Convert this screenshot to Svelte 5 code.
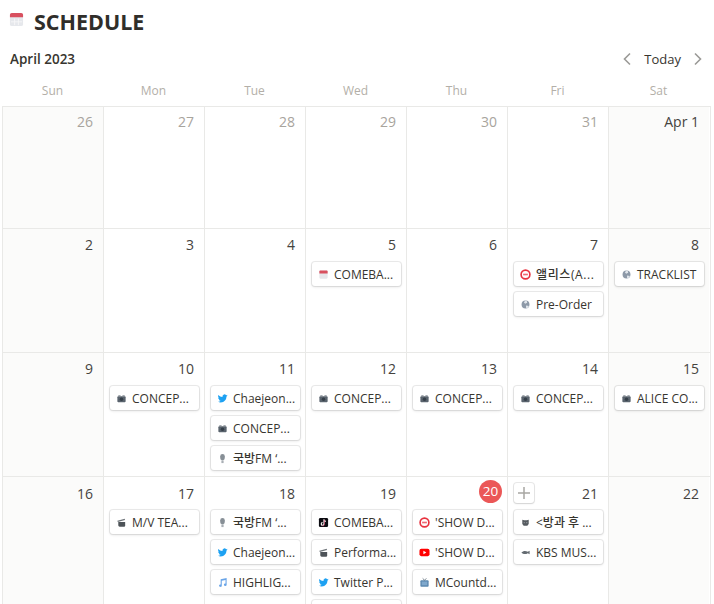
<script>
  const days = ['Sun', 'Mon', 'Tue', 'Wed', 'Thu', 'Fri', 'Sat'];

  const c = (icon, label, kr = false) => ({ icon, label, kr });
  const concept = () => c('camera', 'CONCEP...');
  const chae = () => c('twitter', 'Chaejeon...');
  const radio = () => c('mic', '국방FM ‘...');

  const weeks = [
    [
      { n: '26', muted: true }, { n: '27', muted: true }, { n: '28', muted: true }, { n: '29', muted: true },
      { n: '30', muted: true }, { n: '31', muted: true }, { n: 'Apr 1' },
    ],
    [
      { n: '2' }, { n: '3' }, { n: '4' },
      { n: '5', cards: [c('cal', 'COMEBA...')] },
      { n: '6' },
      { n: '7', cards: [c('ban', '앨리스(A...', true), c('globe', 'Pre-Order')] },
      { n: '8', cards: [c('globe', 'TRACKLIST')] },
    ],
    [
      { n: '9' },
      { n: '10', cards: [concept()] },
      { n: '11', cards: [chae(), concept(), radio()] },
      { n: '12', cards: [concept()] },
      { n: '13', cards: [concept()] },
      { n: '14', cards: [concept()] },
      { n: '15', cards: [c('camera', 'ALICE CO...')] },
    ],
    [
      { n: '16' },
      { n: '17', cards: [c('clap', 'M/V TEA...')] },
      { n: '18', cards: [radio(), chae(), c('note', 'HIGHLIG...')] },
      { n: '19', cards: [c('tiktok', 'COMEBA...'), c('clap', 'Performa...'), c('twitter', 'Twitter P...'), c('', '')] },
      { n: '20', today: true, cards: [c('ban', "'SHOW D..."), c('youtube', "'SHOW D..."), c('tv', 'MCountd...')] },
      { n: '21', add: true, cards: [c('cat', '<방과 후 ...'), c('fish', 'KBS MUS...')] },
      { n: '22' },
    ],
  ];
</script>

{#snippet icon(name)}
  <svg class="ico" viewBox="0 0 12 12" aria-hidden="true">
    {#if name === 'camera'}
      <rect x="1.500" y="3.500" width="9" height="6.500" rx="1" fill="#59636d" />
      <rect x="2.500" y="2.500" width="2.500" height="1.500" fill="#808890" />
      <rect x="7" y="2.500" width="2.500" height="1.500" fill="#808890" />
      <circle cx="6" cy="6.700" r="1.900" fill="#343e48" />
    {:else if name === 'twitter'}
      <path fill="#1da1f2" d="M11.500 2.600c-.4.2-.8.3-1.300.4.500-.3.800-.7 1-1.200-.4.3-.9.400-1.400.5a2.200 2.200 0 0 0-3.800 2C4.200 4.200 2.600 3.400 1.500 2.100c-.6 1-.3 2.300.7 3-.4 0-.7-.1-1-.3 0 1.100.8 2 1.800 2.200-.3.100-.7.100-1 0 .3.900 1.100 1.500 2.100 1.500-.9.700-2.100 1.100-3.300.9 1 .6 2.100 1 3.300 1 4 0 6.300-3.400 6.200-6.500.4-.3.800-.6 1.200-1z" />
    {:else if name === 'mic'}
      <rect x="3.500" y="1" width="5" height="7" rx="2.500" fill="#878f96" />
      <rect x="4.800" y="8" width="2.400" height="3" fill="#a9afb5" />
    {:else if name === 'cal'}
      <rect x="1.500" y="1.500" width="9" height="9" rx="1.200" fill="#e6e6ea" />
      <path fill="#d8505f" d="M1.500 5V2.700c0-.7.500-1.200 1.200-1.200h6.600c.7 0 1.200.5 1.200 1.200V5z" />
    {:else if name === 'ban'}
      <circle cx="6" cy="6" r="4.800" fill="#fff" stroke="#e8323f" stroke-width="1.800" />
      <rect x="3.400" y="5.100" width="5.200" height="1.800" fill="#ef6a74" />
    {:else if name === 'globe'}
      <circle cx="6" cy="6" r="4.300" fill="#8d99a8" />
      <path fill="#dfe4ea" d="M6 1.700c1.400.3 2 1.400 1.800 2.500L5.600 5.300 4.200 3.500zM6.500 7l3.200.5c-.5 1.400-1.600 2.500-3 2.800z" />
    {:else if name === 'clap'}
      <path fill="#4d5358" d="M2.500 5.500h7.500v4c0 .6-.5 1-1 1H4c-.8 0-1.500-.6-1.500-1.500z" />
      <path fill="#6d7378" d="M1.500 4 9.500 2l.4 1.400-8 2.100z" />
    {:else if name === 'note'}
      <path fill="#6aa5e8" d="M4 2.500 10.500 1v7.500a1.500 1.300 0 1 1-1.200-1.300V3.300L5.200 4.200v5.300A1.500 1.300 0 1 1 4 8.200z" />
    {:else if name === 'tiktok'}
      <rect x="1" y="1" width="10" height="10" rx="1.500" fill="#0b0b10" />
      <path fill="none" stroke="#fff" stroke-width="1.200" d="M6.500 2.500v5a1.500 1.500 0 1 1-1.500-1.500M6.500 2.700c.2 1.200 1 1.900 2.200 2" />
      <path fill="none" stroke="#ee1d52" stroke-width=".5" d="M7 3v5a1.500 1.500 0 0 1-2.500 1.300" />
    {:else if name === 'youtube'}
      <rect x=".5" y="2" width="11" height="8" rx="2" fill="#f00" />
      <path fill="#fff" d="M4.800 4.200v3.600L8 6z" />
    {:else if name === 'tv'}
      <rect x="1.500" y="3.500" width="9" height="7" rx="1" fill="#5c89b0" />
      <rect x="3" y="5" width="6" height="4" fill="#7fa8cc" />
      <path stroke="#4a5a68" stroke-width=".8" d="M4 1.500 6 3.500l2-2" fill="none" />
    {:else if name === 'cat'}
      <path fill="#565b60" d="M2.500 3 4.500 3.500h3L9.500 3v4.500L8 9.500H4L2.500 7.500z" />
      <path fill="#8a8f94" d="M4 5.500h1.300v1.300H4zM6.700 5.500H8v1.300H6.700z" />
    {:else if name === 'fish'}
      <path fill="#646b71" d="M1.500 6c2-2 4.500-2.300 7-.8L10.500 4v4L8.500 6.800C6 8.300 3.500 8 1.500 6z" />
    {/if}
  </svg>
{/snippet}

<div class="page">
  <header class="title">
    <svg class="title-ico" viewBox="0 0 16 16" aria-hidden="true">
      <rect x="1" y="1" width="14" height="14" rx="2" fill="#e6e8ec" />
      <path fill="#d8505f" d="M1 5.500V3c0-1.100.9-2 2-2h10c1.100 0 2 .9 2 2v2.500z" />
      <path stroke="#f6f6f8" stroke-width="1" d="M6 7v7M10 7v7M2 10.500h12" />
    </svg>
    <h1>SCHEDULE</h1>
  </header>

  <div class="bar">
    <span class="month">April 2023</span>
    <div class="nav">
      <svg class="chev" viewBox="0 0 10 14" aria-hidden="true"><path d="M8 1.500 2.500 7 8 12.500" /></svg>
      <span class="today-btn">Today</span>
      <svg class="chev" viewBox="0 0 10 14" aria-hidden="true"><path d="M2 1.500 7.500 7 2 12.500" /></svg>
    </div>
  </div>

  <div class="dow">
    {#each days as d}
      <div>{d}</div>
    {/each}
  </div>

  <div class="grid">
    {#each weeks as week}
      <div class="week">
        {#each week as day, i}
          <div class="cell" class:weekend={i === 0 || i === 6}>
            {#if day.add}
              <span class="add">
                <svg viewBox="0 0 14 14" aria-hidden="true"><path d="M7 1v12M1 7h12" /></svg>
              </span>
            {/if}
            <div class="num" class:muted={day.muted}>
              {#if day.today}
                <span class="today">{day.n}</span>
              {:else}
                {day.n}
              {/if}
            </div>
            {#each day.cards ?? [] as card}
              <div class="card">
                {#if card.icon}
                  {@render icon(card.icon)}
                  <span class="label" class:kr={card.kr}>{card.label}</span>
                {/if}
              </div>
            {/each}
          </div>
        {/each}
      </div>
    {/each}
  </div>
</div>

<style>
  :global(body) { background: #fff; overflow: hidden; }

  .page {
    width: 714px;
    height: 604px;
    overflow: hidden;
    font-family: "Open Sans", "Noto Sans CJK KR", sans-serif;
    color: #37352f;
  }

  .title {
    display: flex;
    align-items: center;
    gap: 10px;
    height: 44px;
    padding-left: 9px;
  }
  .title-ico { width: 15px; height: 15px; margin-bottom: 5px; }
  h1 {
    margin: 0;
    font-size: 21.500px;
    font-weight: 700;
    line-height: 44px;
    color: #302e2a;
  }

  .bar {
    display: flex;
    align-items: center;
    justify-content: space-between;
    height: 30px;
    padding: 0 10px;
  }
  .month { font-size: 13.500px; font-weight: 600; }
  .nav { display: flex; align-items: center; gap: 12px; font-size: 13px; margin-right: 1px; }
  .chev { width: 10px; height: 14px; fill: none; stroke: #9b9a97; stroke-width: 1.600; }

  .dow {
    display: grid;
    grid-template-columns: repeat(7, 101px);
    height: 32px;
    padding-left: 2px;
    box-sizing: border-box;
    align-items: center;
    font-size: 12px;
    color: #b3afa8;
    text-align: center;
  }

  .grid {
    margin-left: 2px;
    width: 708px;
    border-top: 1px solid #e9e9e7;
    border-right: 1px solid #e9e9e7;
  }
  .week {
    display: grid;
    grid-template-columns: repeat(7, 101px);
    height: 124px;
    box-sizing: border-box;
    border-bottom: 1px solid #e9e9e7;
  }
  .week:first-child { height: 122px; }
  .week:last-child { height: 160px; }

  .cell {
    position: relative;
    box-sizing: border-box;
    border-left: 1px solid #e9e9e7;
    padding: 0 4px 0 6px;
  }
  .weekend { background: #fbfbfa; }

  .num {
    height: 33px;
    box-sizing: border-box;
    padding: 6px 6px 0 0;
    text-align: right;
    font-size: 14px;
    line-height: 20px;
    color: #45433e;
  }
  .week:first-child .num { padding-top: 5px; }
  .week:last-child .num { padding-top: 7px; }
  .muted { color: #a8a49d; }

  .today {
    position: absolute;
    top: 3px;
    right: 5px;
    width: 23px;
    height: 23px;
    border-radius: 50%;
    background: #eb5757;
    color: #fff;
    font-size: 13.500px;
    line-height: 23px;
    text-align: center;
  }

  .add {
    position: absolute;
    top: 6px;
    left: 6px;
    width: 20px;
    height: 20px;
    display: flex;
    align-items: center;
    justify-content: center;
    background: #fff;
    border-radius: 3px;
    box-shadow: 0 0 0 1px rgba(15, 15, 15, 0.09), 0 1px 2px rgba(15, 15, 15, 0.1);
  }
  .add svg { width: 14px; height: 14px; fill: none; stroke: #a8a7a3; stroke-width: 1.500; }

  .card {
    display: flex;
    align-items: center;
    gap: 5px;
    height: 24px;
    width: 89px;
    margin-bottom: 6px;
    padding-left: 6px;
    box-sizing: border-box;
    background: #fff;
    border-radius: 3px;
    box-shadow: 0 0 0 1px rgba(15, 15, 15, 0.08), 0 1px 3px rgba(15, 15, 15, 0.12);
    font-size: 12px;
    font-weight: 500;
    white-space: nowrap;
    overflow: hidden;
  }
  .ico { width: 11px; height: 11px; flex-shrink: 0; }
  .kr { letter-spacing: 0.6px; }
</style>
